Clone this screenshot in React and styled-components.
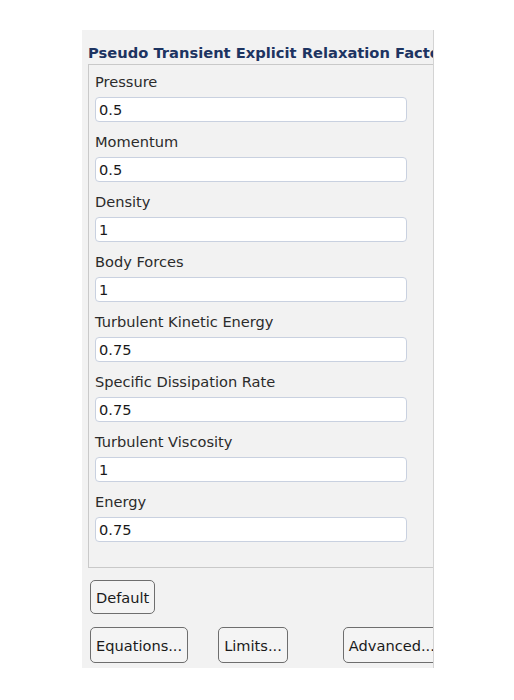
import React from "react";
import styled, { createGlobalStyle } from "styled-components";

const GlobalStyle = createGlobalStyle`
  body {
    margin: 0;
    background: #ffffff;
    font-family: "DejaVu Sans", "Liberation Sans", sans-serif;
  }
`;

const factors = [
  { label: "Pressure", value: "0.5" },
  { label: "Momentum", value: "0.5" },
  { label: "Density", value: "1" },
  { label: "Body Forces", value: "1" },
  { label: "Turbulent Kinetic Energy", value: "0.75" },
  { label: "Specific Dissipation Rate", value: "0.75" },
  { label: "Turbulent Viscosity", value: "1" },
  { label: "Energy", value: "0.75" },
];

export default function App() {
  return (
    <>
      <GlobalStyle />
      <Panel>
        <Title>Pseudo Transient Explicit Relaxation Factors</Title>
        <GroupBox>
          {factors.map((f) => (
            <Field key={f.label}>
              <Label>{f.label}</Label>
              <Input defaultValue={f.value} />
            </Field>
          ))}
        </GroupBox>
        <ButtonRow $top={12}>
          <Button $h={34}>Default</Button>
        </ButtonRow>
        <ButtonRow $top={13}>
          <Button>Equations...</Button>
          <Button $ml={30}>Limits...</Button>
          <Button $ml={55}>Advanced...</Button>
        </ButtonRow>
      </Panel>
    </>
  );
}

const Panel = styled.div`
  margin: 30px 0 0 82px;
  width: 351px;
  height: 638px;
  background: #f2f2f2;
  border-right: 1px solid #d4d4d4;
  overflow: hidden;
  display: flex;
  flex-direction: column;
`;

const Title = styled.div`
  margin: 14px 0 0 6px;
  font-size: 14.7px;
  font-weight: bold;
  color: #1d3461;
  white-space: nowrap;
  line-height: 18px;
`;

const GroupBox = styled.div`
  margin: 2px -20px 0 6px;
  border: 1px solid #c9c9c9;
  padding: 7px 0 25px 6px;
  display: flex;
  flex-direction: column;
  gap: 10px;
`;

const Field = styled.div`
  display: flex;
  flex-direction: column;
  gap: 5px;
`;

const Label = styled.div`
  font-size: 14.6px;
  color: #2b2b2b;
  line-height: 20px;
`;

const Input = styled.input`
  width: 312px;
  height: 25px;
  box-sizing: border-box;
  border: 1px solid #c9d1e0;
  border-radius: 4px;
  background: #ffffff;
  padding: 0 3px;
  font-family: "DejaVu Sans", sans-serif;
  font-size: 14.6px;
  color: #1a1a1a;
  outline: none;
`;

const ButtonRow = styled.div`
  display: flex;
  margin: ${(p) => p.$top}px 0 0 8px;
  white-space: nowrap;
`;

const Button = styled.button`
  flex-shrink: 0;
  height: ${(p) => p.$h || 36}px;
  margin-left: ${(p) => p.$ml || 0}px;
  padding: 0 5px;
  border: 1px solid #6e6e6e;
  border-radius: 5px;
  background: #f4f4f4;
  font-family: "DejaVu Sans", sans-serif;
  font-size: 14.6px;
  color: #1a1a1a;
  cursor: pointer;
`;
